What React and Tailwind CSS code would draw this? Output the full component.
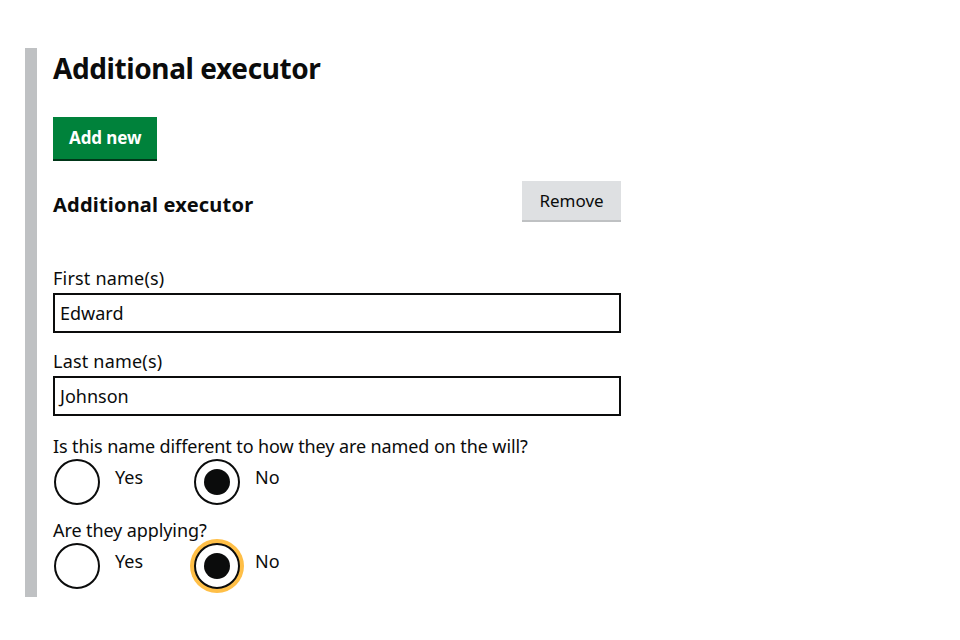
function Radio({ label, checked, focused }) {
  return (
    <label className="flex items-start">
      <span
        className={
          "relative flex h-[46px] w-[46px] items-center justify-center rounded-full border-2 border-[#0b0c0c] bg-white" +
          (focused ? " shadow-[0_0_0_4px_#ffbf47]" : "")
        }
      >
        {checked && <span className="h-[26px] w-[26px] rounded-full bg-[#0b0c0c]" />}
      </span>
      <span className="ml-[15px] mt-[7px] text-[18px] leading-[22px]">{label}</span>
    </label>
  );
}

function RadioGroup({ question, value, focused }) {
  return (
    <div>
      <p className="text-[18px] leading-[22px] tracking-[-0.1px]">{question}</p>
      <div className="mt-[2px] flex pl-px">
        <div className="w-[140px]">
          <Radio label="Yes" checked={value === "yes"} />
        </div>
        <Radio label="No" checked={value === "no"} focused={focused} />
      </div>
    </div>
  );
}

function TextField({ label, value }) {
  return (
    <div>
      <p className="text-[18px] leading-[22px] tracking-[0.2px]">{label}</p>
      <div className="mt-[4px] flex h-[40px] w-[568px] items-center border-2 border-[#0b0c0c] px-[5px] text-[18px]">
        {value}
      </div>
    </div>
  );
}

export default function App() {
  return (
    <div className="h-[640px] w-[960px] bg-white pt-[48px] pl-[25px] text-[#0b0c0c] font-['Noto_Sans',sans-serif]">
      <div className="w-[600px] border-l-[12px] border-[#bfc1c3] pl-[16px] pt-[2px] pb-[8px]">
        <h1 className="text-[28px] font-bold leading-[36px] tracking-[-0.4px]">Additional executor</h1>
        <button className="mt-[31px] h-[42px] bg-[#00823b] px-[16px] text-[17px] font-bold text-white shadow-[0_2px_0_#003618] tracking-[-0.1px]">
          Add new
        </button>
        <div className="mt-[22px] flex w-[568px] items-start justify-between">
          <h2 className="mt-[12px] text-[20px] font-bold leading-[24px] tracking-[0.2px]">Additional executor</h2>
          <button className="h-[39px] w-[99px] bg-[#dee0e2] text-[17px] shadow-[0_2px_0_#bfc1c3]">Remove</button>
        </div>
        <div className="mt-[47px] flex flex-col gap-[17px]">
          <TextField label="First name(s)" value="Edward" />
          <TextField label="Last name(s)" value="Johnson" />
        </div>
        <div className="mt-[19px] flex flex-col gap-[14px]">
          <RadioGroup question="Is this name different to how they are named on the will?" value="no" />
          <RadioGroup question="Are they applying?" value="no" focused />
        </div>
      </div>
    </div>
  );
}
